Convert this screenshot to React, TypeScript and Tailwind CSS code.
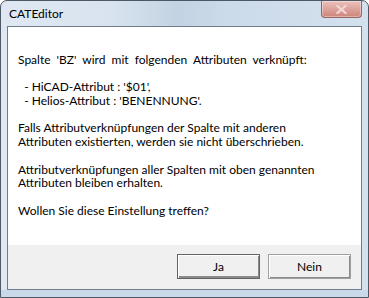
import React from 'react'

const font = { fontFamily: 'Lato, "Open Sans", sans-serif' }

function CloseButton() {
  return (
    <div className="absolute right-[6px] top-0 flex h-[17px] w-[41px] items-center justify-center rounded-b-[4px] border border-t-0 border-[#9a6662] bg-gradient-to-b from-[#ebc1bc] via-[#dca39c] to-[#cd8479] shadow-[inset_0_0_0_1px_rgba(255,255,255,0.35)]">
      <svg width="11" height="9" viewBox="0 0 11 9">
        <path d="M1.5 1 L9.5 8 M9.5 1 L1.5 8" stroke="#f1d6d2" strokeWidth="2.2" strokeLinecap="square" />
      </svg>
    </div>
  )
}

function DialogButton({ label, isDefault }: { label: string; isDefault?: boolean }) {
  return (
    <button
      className={
        'h-[25px] w-[83px] bg-[#f0f0f0] text-[12px] text-black ' +
        (isDefault
          ? 'border border-[#646464] shadow-[inset_1px_1px_0_#ffffff,inset_-1px_-2px_0_#8a8a8a]'
          : 'border border-[#a0a0a0] shadow-[inset_1px_1px_0_#ffffff,inset_-1px_-1px_0_#8a8a8a]')
      }
      style={font}
    >
      {label}
    </button>
  )
}

export default function App() {
  const lines = [
    "Spalte 'BZ' wird mit folgenden Attributen verknüpft:",
    '',
    "  - HiCAD-Attribut : '$01',",
    "  - Helios-Attribut : 'BENENNUNG'.",
    '',
    'Falls Attributverknüpfungen der Spalte mit anderen',
    'Attributen existierten, werden sie nicht überschrieben.',
    '',
    'Attributverknüpfungen aller Spalten mit oben genannten',
    'Attributen bleiben erhalten.',
    '',
    'Wollen Sie diese Einstellung treffen?',
  ]

  return (
    <div className="h-[298px] w-[369px] bg-white">
      <div className="relative flex h-[298px] w-[369px] flex-col rounded-t-[7px] border border-[#4c5866] bg-[linear-gradient(90deg,#dfe8f2_0%,#d8e3ef_30%,#c3d3e3_48%,#ccdbea_62%,#d3e0ee_100%)]">
        {/* title bar */}
        <div className="flex h-[25px] shrink-0 items-center pl-[8px] text-[12px] text-black" style={font}>
          CATEditor
        </div>
        <CloseButton />

        {/* client area */}
        <div className="mx-[6px] flex h-[264px] flex-col border border-[#6f7d8c] bg-white">
          <div className="h-[218px] pl-[10px] pt-[26px] text-[12px] leading-[13.7px] text-black" style={font}>
            {lines.map((l, i) => (
              <div key={i} className={'h-[13.7px] whitespace-pre' + (i === 0 ? ' [word-spacing:3px]' : '')}>
                {l}
              </div>
            ))}
          </div>
          <div className="flex flex-1 items-start justify-end gap-[8px] bg-[#f0f0f0] pr-[10px] pt-[9px]">
            <DialogButton label="Ja" isDefault />
            <DialogButton label="Nein" />
          </div>
        </div>
        <div className="flex-1 bg-[#c9d9ea]" />
      </div>
    </div>
  )
}
